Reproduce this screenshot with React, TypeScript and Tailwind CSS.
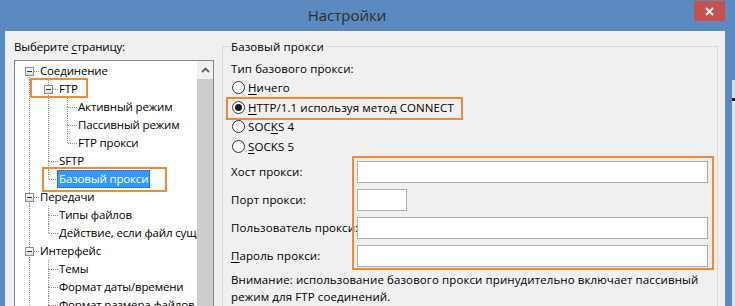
import React from "react";

type Row = {
  label: string;
  level: number;
  guides: boolean[];
  hasNext: boolean;
  expander?: boolean;
  first?: boolean;
  selected?: boolean;
};

const rows: Row[] = [
  { label: "Соединение", level: 0, guides: [], hasNext: true, expander: true, first: true },
  { label: "FTP", level: 1, guides: [true], hasNext: true, expander: true },
  { label: "Активный режим", level: 2, guides: [true, true], hasNext: true },
  { label: "Пассивный режим", level: 2, guides: [true, true], hasNext: true },
  { label: "FTP прокси", level: 2, guides: [true, true], hasNext: false },
  { label: "SFTP", level: 1, guides: [true], hasNext: true },
  { label: "Базовый прокси", level: 1, guides: [true], hasNext: false, selected: true },
  { label: "Передачи", level: 0, guides: [], hasNext: true, expander: true },
  { label: "Типы файлов", level: 1, guides: [true], hasNext: true },
  { label: "Действие, если файл существует", level: 1, guides: [true], hasNext: false },
  { label: "Интерфейс", level: 0, guides: [], hasNext: true, expander: true },
  { label: "Темы", level: 1, guides: [true], hasNext: true },
  { label: "Формат даты/времени", level: 1, guides: [true], hasNext: true },
  { label: "Формат размера файлов", level: 1, guides: [true], hasNext: true },
];

const LINE = "#8f8f8f";

function GuideCell({ full }: { full: boolean }) {
  return (
    <svg width="19" height="18" className="shrink-0" shapeRendering="crispEdges">
      {full && <line x1="9.5" y1="0" x2="9.5" y2="18" stroke={LINE} strokeDasharray="1 1" />}
    </svg>
  );
}

function OwnCell({ row }: { row: Row }) {
  return (
    <svg width="19" height="18" className="shrink-0" shapeRendering="crispEdges">
      {!row.first && <line x1="9.5" y1="0" x2="9.5" y2="9" stroke={LINE} strokeDasharray="1 1" />}
      {row.hasNext && <line x1="9.5" y1="9" x2="9.5" y2="18" stroke={LINE} strokeDasharray="1 1" />}
      <line x1={row.expander ? 14 : 10} y1="9.5" x2="19" y2="9.5" stroke={LINE} strokeDasharray="1 1" />
      {row.expander && (
        <g>
          <defs>
            <linearGradient id="bx" x1="0" y1="0" x2="0" y2="1">
              <stop offset="0" stopColor="#ffffff" />
              <stop offset="1" stopColor="#d8d8d8" />
            </linearGradient>
          </defs>
          <rect x="5.5" y="5.5" width="8" height="8" fill="url(#bx)" stroke="#8e8f8f" />
          <line x1="7" y1="9.5" x2="12" y2="9.5" stroke="#2f3a55" />
        </g>
      )}
    </svg>
  );
}

function TreeRow({ row }: { row: Row }) {
  return (
    <div className="flex h-[18px] items-center whitespace-nowrap">
      {row.guides.map((g, i) => (
        <GuideCell key={i} full={g} />
      ))}
      <OwnCell row={row} />
      {row.selected ? (
        <span className="ml-[-1px] flex h-[18px] items-center bg-[#3399ff] px-[2px] text-white outline-1 outline-dotted outline-[#1f5f9f] outline-offset-[-1px]">
          {row.label}
        </span>
      ) : (
        <span className="ml-[1px] text-black">{row.label}</span>
      )}
    </div>
  );
}

function Radio({ checked }: { checked?: boolean }) {
  return (
    <span className="flex h-[13px] w-[13px] shrink-0 items-center justify-center rounded-full border border-[#333333] bg-white">
      {checked && <span className="h-[7px] w-[7px] rounded-full bg-[#1a1a1a]" />}
    </span>
  );
}

export default function App() {
  return (
    <div className="relative flex h-[306px] w-[735px] overflow-hidden bg-[#5a8abf] font-['Open_Sans',sans-serif] text-[11.5px] tracking-[-0.15px] text-black">
      <div className="flex w-[732px] shrink-0 flex-col">
        {/* Title bar */}
        <div className="flex h-[31px] shrink-0">
          <div className="flex flex-1 items-center justify-center pb-[1px] text-[15px] tracking-normal text-[#2e2e2e]">
            Настройки
          </div>
          <div className="mt-[1px] flex h-[20px] w-[31px] items-center justify-center bg-[#c75050]">
            <svg width="9" height="9" viewBox="0 0 9 9">
              <path d="M1 1 L8 8 M8 1 L1 8" stroke="#fff" strokeWidth="1.8" />
            </svg>
          </div>
          <div className="w-[7px]" />
        </div>
        {/* Body */}
        <div className="ml-[5px] flex w-[720px] flex-1 bg-[#f0f0f0]">
          {/* Left panel */}
          <div className="flex w-[217px] shrink-0 flex-col pl-[9px]">
            <div className="mt-[7px] h-[18px] leading-[18px]">
              Выберите <u className="underline-offset-2">с</u>траницу:
            </div>
            <div className="mt-[4px] flex h-[260px] w-[200px] border border-[#828790] bg-white">
              <div className="w-[182px] overflow-hidden pl-[5px] pt-[1px]">
                {rows.map((r, i) => (
                  <TreeRow key={i} row={r} />
                ))}
              </div>
              <div className="flex w-[16px] flex-col bg-[#f0f0f0]">
                <div className="flex h-[18px] items-center justify-center">
                  <svg width="9" height="6" viewBox="0 0 9 6">
                    <path d="M1 5 L4.5 1.5 L8 5" stroke="#606060" strokeWidth="1.8" fill="none" />
                  </svg>
                </div>
                <div className="flex-1 bg-[#cdcdcd]" />
              </div>
            </div>
          </div>
          {/* Right panel */}
          <div className="flex flex-col tracking-[0.1px]">
            <div className="mt-[15px] h-[300px] w-[496px] border border-[#dcdcdc] pl-[8px] pr-[8px]">
              <div className="-mt-[9px] h-[18px] w-fit bg-[#f0f0f0] pr-[2px] leading-[18px]">Базовый прокси</div>
              <div className="mt-[4px] h-[18px] leading-[18px]">Тип базового прокси:</div>
              <div className="flex flex-col">
                <div className="flex h-[19.5px] items-center gap-[3px] pl-[1px]">
                  <Radio />
                  <span>
                    <u className="underline-offset-2">Н</u>ичего
                  </span>
                </div>
                <div className="relative flex h-[19.5px] items-center gap-[3px] pl-[1px]">
                  <Radio checked />
                  <span>
                    <u className="underline-offset-2">H</u>TTP/1.1 используя метод CONNECT
                  </span>
                  <div className="pointer-events-none absolute left-[-5px] top-[-1px] h-[23px] w-[237px] border-2 border-[#f58a35]" />
                </div>
                <div className="flex h-[19.5px] items-center gap-[3px] pl-[1px]">
                  <Radio />
                  <span>
                    SOC<u className="underline-offset-2">K</u>S 4
                  </span>
                </div>
                <div className="flex h-[19.5px] items-center gap-[3px] pl-[1px]">
                  <Radio />
                  <span>
                    <u className="underline-offset-2">S</u>OCKS 5
                  </span>
                </div>
              </div>
              <div className="relative mt-[5px] flex flex-col gap-[6px]">
                <div className="flex h-[22px] items-center">
                  <div className="w-[126px] shrink-0 overflow-hidden whitespace-nowrap">Хост прокси:</div>
                  <div className="h-[22px] w-[351px] border border-[#abadb3] bg-white" />
                </div>
                <div className="flex h-[22px] items-center">
                  <div className="w-[126px] shrink-0 overflow-hidden whitespace-nowrap">Порт прокси:</div>
                  <div className="h-[22px] w-[50px] border border-[#abadb3] bg-white" />
                </div>
                <div className="flex h-[22px] items-center">
                  <div className="w-[126px] shrink-0 overflow-hidden whitespace-nowrap">Пользователь прокси:</div>
                  <div className="h-[22px] w-[351px] border border-[#abadb3] bg-white" />
                </div>
                <div className="flex h-[22px] items-center">
                  <div className="w-[126px] shrink-0 overflow-hidden whitespace-nowrap">
                    <u className="underline-offset-2">П</u>ароль прокси:
                  </div>
                  <div className="h-[22px] w-[351px] border border-[#abadb3] bg-white" />
                </div>
                <div className="pointer-events-none absolute left-[121px] top-[-5px] h-[114px] w-[362px] border-2 border-[#f58a35]" />
              </div>
              <div className="mt-[4px] whitespace-nowrap leading-[17px]">
                Внимание: использование базового прокси принудительно включает пассивный
                <br />
                режим для FTP соединений.
              </div>
            </div>
          </div>
        </div>
      </div>
      <div className="flex w-[3px] flex-col">
        <div className="h-[80px] bg-[#5a8abf]" />
        <div className="h-[18px] bg-[#dcdcdc]" />
        <div className="h-[3px] bg-[#3a1020]" />
        <div className="flex-1 bg-[#e6e6e6]" />
      </div>
      {/* Orange annotation boxes on tree */}
      <div className="pointer-events-none absolute left-[30px] top-[78px] h-[20px] w-[58px] border-2 border-[#f58a35]" />
      <div className="pointer-events-none absolute left-[42px] top-[167px] h-[25px] w-[125px] border-2 border-[#f58a35]" />
    </div>
  );
}
